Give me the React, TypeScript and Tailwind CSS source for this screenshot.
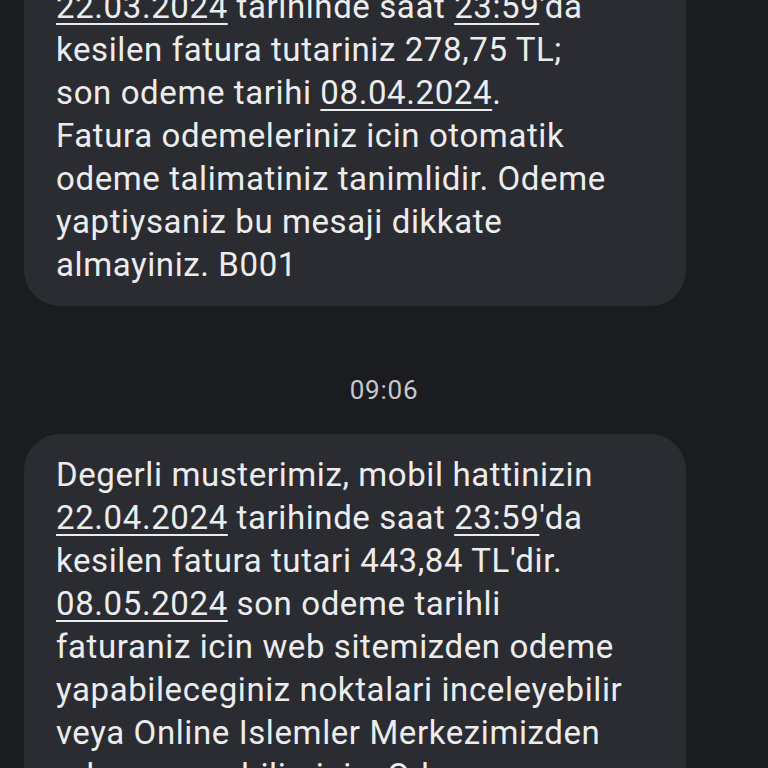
const U = ({ children }: { children: React.ReactNode }) => (
  <span className="underline decoration-2 underline-offset-[5px]">{children}</span>
);

function Bubble({ children, className = "" }: { children: React.ReactNode; className?: string }) {
  return (
    <div className={`ml-6 w-[662px] rounded-[36px] bg-[#2b2c31] pl-8 pr-4 pt-[19px] pb-[20px] ${className}`}>
      <p className="whitespace-nowrap text-[33px] leading-[43px] tracking-[0.6px] text-[#ececee]">{children}</p>
    </div>
  );
}

export default function App() {
  return (
    <div
      className="h-[768px] w-[768px] overflow-hidden bg-[#1b1c20]"
      style={{ fontFamily: "Roboto, 'Noto Sans', sans-serif" }}
    >
      <Bubble className="mt-[-77px]">
        Degerli musterimiz, mobil hattinizin
        <br />
        <U>22.03.2024</U> tarihinde saat <U>23:59</U>'da
        <br />
        kesilen fatura tutariniz 278,75 TL;
        <br />
        son odeme tarihi <U>08.04.2024</U>.
        <br />
        Fatura odemeleriniz icin otomatik
        <br />
        odeme talimatiniz tanimlidir. Odeme
        <br />
        yaptiysaniz bu mesaji dikkate
        <br />
        almayiniz. B001
      </Bubble>

      <div className="mt-[68px] mb-[28px] text-center text-[26px] leading-8 tracking-[0.8px] text-[#c8c8cc]">09:06</div>

      <Bubble>
        Degerli musterimiz, mobil hattinizin
        <br />
        <U>22.04.2024</U> tarihinde saat <U>23:59</U>'da
        <br />
        kesilen fatura tutari 443,84 TL'dir.
        <br />
        <U>08.05.2024</U> son odeme tarihli
        <br />
        faturaniz icin web sitemizden odeme
        <br />
        yapabileceginiz noktalari inceleyebilir
        <br />
        veya Online Islemler Merkezimizden
        <br />
        odeme yapabilirsiniz. Odeme
      </Bubble>
    </div>
  );
}
